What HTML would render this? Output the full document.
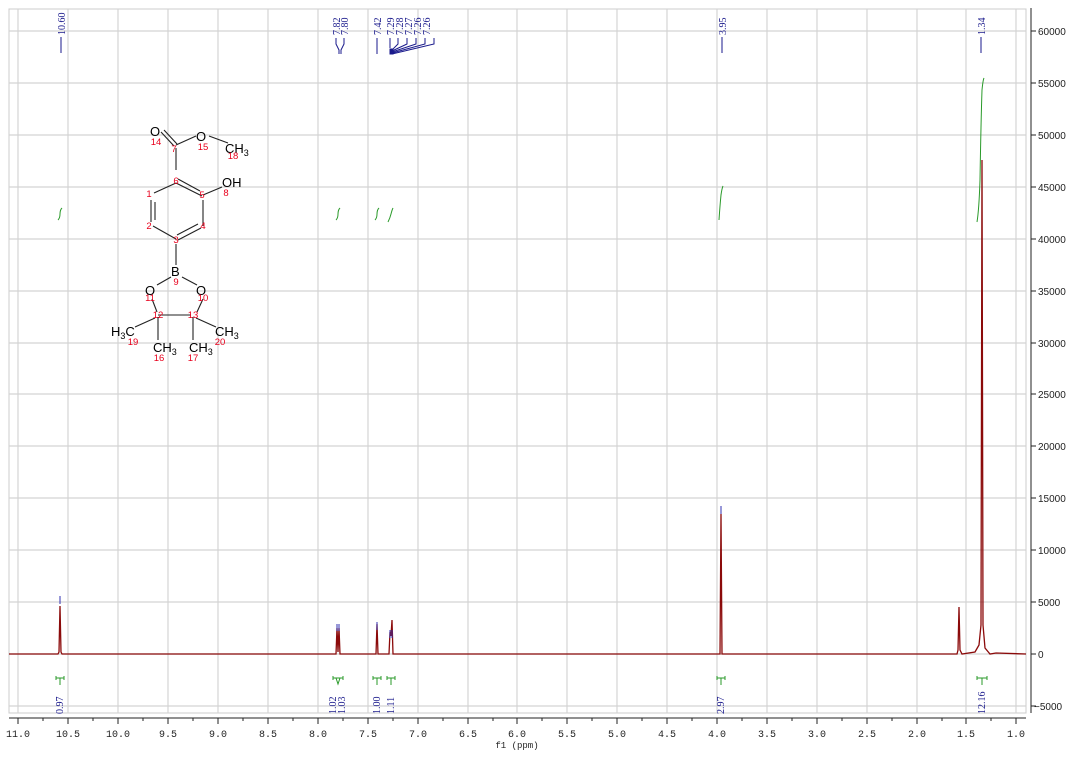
<!DOCTYPE html>
<html><head><meta charset="utf-8"><style>
body{margin:0;background:#fff;}
svg{display:block;font-family:"Liberation Sans",sans-serif;}
.g{stroke:#d4d4d4;stroke-width:1.2;}
.t{font-family:"Liberation Serif",serif;font-size:10px;fill:#1a1a8c;}
.ax{font-family:"Liberation Mono",monospace;font-size:10px;fill:#222;}
.r{fill:#e8001c;font-size:9.5px;}
.a{fill:#000;font-size:13px;}
</style></head><body>
<svg width="1088" height="760" viewBox="0 0 1088 760">
<rect x="9" y="9" width="1017" height="704" fill="#fff" stroke="#ccc"/>
<g class="g">
<line x1="18" y1="9" x2="18" y2="713"/><line x1="68" y1="9" x2="68" y2="713"/><line x1="118" y1="9" x2="118" y2="713"/><line x1="168" y1="9" x2="168" y2="713"/><line x1="218" y1="9" x2="218" y2="713"/><line x1="268" y1="9" x2="268" y2="713"/><line x1="318" y1="9" x2="318" y2="713"/><line x1="368" y1="9" x2="368" y2="713"/><line x1="418" y1="9" x2="418" y2="713"/><line x1="468" y1="9" x2="468" y2="713"/><line x1="517" y1="9" x2="517" y2="713"/><line x1="567" y1="9" x2="567" y2="713"/><line x1="617" y1="9" x2="617" y2="713"/><line x1="667" y1="9" x2="667" y2="713"/><line x1="717" y1="9" x2="717" y2="713"/><line x1="767" y1="9" x2="767" y2="713"/><line x1="817" y1="9" x2="817" y2="713"/><line x1="867" y1="9" x2="867" y2="713"/><line x1="917" y1="9" x2="917" y2="713"/><line x1="966" y1="9" x2="966" y2="713"/><line x1="1016" y1="9" x2="1016" y2="713"/>
<line x1="9" y1="31" x2="1026" y2="31"/><line x1="9" y1="83" x2="1026" y2="83"/><line x1="9" y1="135" x2="1026" y2="135"/><line x1="9" y1="187" x2="1026" y2="187"/><line x1="9" y1="239" x2="1026" y2="239"/><line x1="9" y1="291" x2="1026" y2="291"/><line x1="9" y1="343" x2="1026" y2="343"/><line x1="9" y1="394" x2="1026" y2="394"/><line x1="9" y1="446" x2="1026" y2="446"/><line x1="9" y1="498" x2="1026" y2="498"/><line x1="9" y1="550" x2="1026" y2="550"/><line x1="9" y1="602" x2="1026" y2="602"/><line x1="9" y1="654" x2="1026" y2="654"/><line x1="9" y1="706" x2="1026" y2="706"/>
</g>
<!-- y axis -->
<line x1="1031" y1="8" x2="1031" y2="713" stroke="#222"/>
<g stroke="#222">
<line x1="1031" y1="31" x2="1036" y2="31"/><line x1="1031" y1="83" x2="1036" y2="83"/><line x1="1031" y1="135" x2="1036" y2="135"/><line x1="1031" y1="187" x2="1036" y2="187"/><line x1="1031" y1="239" x2="1036" y2="239"/><line x1="1031" y1="291" x2="1036" y2="291"/><line x1="1031" y1="343" x2="1036" y2="343"/><line x1="1031" y1="394" x2="1036" y2="394"/><line x1="1031" y1="446" x2="1036" y2="446"/><line x1="1031" y1="498" x2="1036" y2="498"/><line x1="1031" y1="550" x2="1036" y2="550"/><line x1="1031" y1="602" x2="1036" y2="602"/><line x1="1031" y1="654" x2="1036" y2="654"/><line x1="1031" y1="706" x2="1036" y2="706"/>
</g>
<g class="ax" font-family="Liberation Sans" style="font-family:'Liberation Sans',sans-serif;font-size:10px">
<text x="1038" y="35">60000</text><text x="1038" y="87">55000</text><text x="1038" y="139">50000</text><text x="1038" y="191">45000</text><text x="1038" y="243">40000</text><text x="1038" y="295">35000</text><text x="1038" y="347">30000</text><text x="1038" y="398">25000</text><text x="1038" y="450">20000</text><text x="1038" y="502">15000</text><text x="1038" y="554">10000</text><text x="1038" y="606">5000</text><text x="1038" y="658">0</text><text x="1034" y="710">−5000</text>
</g>
<!-- x axis -->
<line x1="9" y1="718" x2="1026" y2="718" stroke="#222"/>
<g stroke="#222">
<line x1="18" y1="718" x2="18" y2="724"/><line x1="68" y1="718" x2="68" y2="724"/><line x1="118" y1="718" x2="118" y2="724"/><line x1="168" y1="718" x2="168" y2="724"/><line x1="218" y1="718" x2="218" y2="724"/><line x1="268" y1="718" x2="268" y2="724"/><line x1="318" y1="718" x2="318" y2="724"/><line x1="368" y1="718" x2="368" y2="724"/><line x1="418" y1="718" x2="418" y2="724"/><line x1="468" y1="718" x2="468" y2="724"/><line x1="517" y1="718" x2="517" y2="724"/><line x1="567" y1="718" x2="567" y2="724"/><line x1="617" y1="718" x2="617" y2="724"/><line x1="667" y1="718" x2="667" y2="724"/><line x1="717" y1="718" x2="717" y2="724"/><line x1="767" y1="718" x2="767" y2="724"/><line x1="817" y1="718" x2="817" y2="724"/><line x1="867" y1="718" x2="867" y2="724"/><line x1="917" y1="718" x2="917" y2="724"/><line x1="966" y1="718" x2="966" y2="724"/><line x1="1016" y1="718" x2="1016" y2="724"/>
<line x1="43" y1="718" x2="43" y2="721"/><line x1="93" y1="718" x2="93" y2="721"/><line x1="143" y1="718" x2="143" y2="721"/><line x1="193" y1="718" x2="193" y2="721"/><line x1="243" y1="718" x2="243" y2="721"/><line x1="293" y1="718" x2="293" y2="721"/><line x1="343" y1="718" x2="343" y2="721"/><line x1="393" y1="718" x2="393" y2="721"/><line x1="443" y1="718" x2="443" y2="721"/><line x1="493" y1="718" x2="493" y2="721"/><line x1="542" y1="718" x2="542" y2="721"/><line x1="592" y1="718" x2="592" y2="721"/><line x1="642" y1="718" x2="642" y2="721"/><line x1="692" y1="718" x2="692" y2="721"/><line x1="742" y1="718" x2="742" y2="721"/><line x1="792" y1="718" x2="792" y2="721"/><line x1="842" y1="718" x2="842" y2="721"/><line x1="892" y1="718" x2="892" y2="721"/><line x1="942" y1="718" x2="942" y2="721"/><line x1="991" y1="718" x2="991" y2="721"/>
</g>
<g class="ax" text-anchor="middle">
<text x="18" y="737">11.0</text><text x="68" y="737">10.5</text><text x="118" y="737">10.0</text><text x="168" y="737">9.5</text><text x="218" y="737">9.0</text><text x="268" y="737">8.5</text><text x="318" y="737">8.0</text><text x="368" y="737">7.5</text><text x="418" y="737">7.0</text><text x="468" y="737">6.5</text><text x="517" y="737">6.0</text><text x="567" y="737">5.5</text><text x="617" y="737">5.0</text><text x="667" y="737">4.5</text><text x="717" y="737">4.0</text><text x="767" y="737">3.5</text><text x="817" y="737">3.0</text><text x="867" y="737">2.5</text><text x="917" y="737">2.0</text><text x="966" y="737">1.5</text><text x="1016" y="737">1.0</text>
<text x="517" y="748" style="font-size:9px">f1 (ppm)</text>
</g>
<!-- spectrum -->
<path d="M9 654 L58 654 L59 652 L60 606 L61 652 L62 654 L336 654 L337 628 L338 652 L339 628 L340 654 L376 654 L377 624 L378 654 L389 654 L390 632 L391 636 L392 620 L393 654 L720 654 L721 514 L722 654 L957 654 L958 650 L959 607 L960 650 L962 654 L975 652 L979 645 L981 625 L982 160 L983 625 L985 648 L990 654 L996 653 L1026 654" fill="none" stroke="#8b0a0a" stroke-width="1.3"/>
<!-- peak marks -->
<g stroke="#3030b0"><line x1="60" y1="596" x2="60" y2="604"/><line x1="337" y1="624" x2="337" y2="631"/><line x1="339" y1="624" x2="339" y2="631"/><line x1="377" y1="622" x2="377" y2="630"/><line x1="390" y1="630" x2="390" y2="638"/><line x1="392" y1="630" x2="392" y2="638"/><line x1="721" y1="506" x2="721" y2="514"/></g>
<!-- integrals -->
<g fill="none" stroke="#2a9a2a" stroke-width="1">
<path d="M58 220 Q60 218 60 214 Q60 210 62 208"/>
<path d="M336 220 Q338 218 338 214 Q338 210 340 208"/>
<path d="M375 220 Q377 218 377 214 Q377 210 379 208"/>
<path d="M388 222 Q390 218 391 214 Q392 210 393 208"/>
<path d="M719 220 Q720 205 721 195 Q722 188 723 186"/>
<path d="M977 222 Q979 210 980 180 Q981 120 982 90 Q983 80 984 78"/>
</g>
<!-- integral brackets -->
<g stroke="#2a9a2a" fill="none"><path d="M56 678 H64 M56 676 V680 M64 676 V680 M60 678 V685"/>
<path d="M333 678 H343 M333 676 V680 M343 676 V680 M336 678 L338 684 L340 678"/>
<path d="M373 678 H381 M373 676 V680 M381 676 V680 M377 678 V685"/>
<path d="M387 678 H395 M387 676 V680 M395 676 V680 M391 678 V685"/>
<path d="M717 678 H725 M717 676 V680 M725 676 V680 M721 678 V685"/>
<path d="M977 678 H987 M977 676 V680 M987 676 V680 M982 678 V685"/></g>
<g class="t">
<text transform="translate(63,714) rotate(-90)">0.97</text>
<text transform="translate(336,714) rotate(-90)">1.02</text>
<text transform="translate(345,714) rotate(-90)">1.03</text>
<text transform="translate(380,714) rotate(-90)">1.00</text>
<text transform="translate(394,714) rotate(-90)">1.11</text>
<text transform="translate(724,714) rotate(-90)">2.97</text>
<text transform="translate(985,714) rotate(-90)">12.16</text>
</g>
<!-- peak labels top -->
<g stroke="#1a1a8c" fill="none">
<line x1="61" y1="37" x2="61" y2="53"/>
<path d="M336 38 V44 L339 50 V54 M344 38 V44 L341 50 V54"/>
<line x1="377" y1="38" x2="377" y2="54"/>
<path d="M390 38 V48 M398 38 V44 L392 50 M407 38 V44 L392 51 M416 38 V44 L392 52 M425 38 V44 L392 53 M434 38 V44 L392 54"/>
<rect x="390" y="49" width="3" height="5" fill="#1a1a8c"/>
<line x1="722" y1="37" x2="722" y2="53"/>
<line x1="981" y1="37" x2="981" y2="53"/>
</g>
<g class="t">
<text transform="translate(65,35) rotate(-90)">10.60</text>
<text transform="translate(340,35) rotate(-90)">7.82</text>
<text transform="translate(348,35) rotate(-90)">7.80</text>
<text transform="translate(381,35) rotate(-90)">7.42</text>
<text transform="translate(394,35) rotate(-90)">7.29</text>
<text transform="translate(403,35) rotate(-90)">7.28</text>
<text transform="translate(412,35) rotate(-90)">7.27</text>
<text transform="translate(421,35) rotate(-90)">7.26</text>
<text transform="translate(430,35) rotate(-90)">7.26</text>
<text transform="translate(726,35) rotate(-90)">3.95</text>
<text transform="translate(985,35) rotate(-90)">1.34</text>
</g>
<!-- molecule -->
<g stroke="#222" stroke-width="1.1" fill="none">
<line x1="161" y1="132" x2="174" y2="146"/><line x1="164" y1="130" x2="177" y2="144"/>
<line x1="176" y1="145" x2="196" y2="136"/>
<line x1="209" y1="136" x2="228" y2="143"/>
<line x1="176" y1="148" x2="176" y2="170"/>
<line x1="176" y1="183" x2="202" y2="196"/><line x1="178" y1="179" x2="200" y2="191"/>
<line x1="203" y1="195" x2="222" y2="187"/>
<line x1="176" y1="183" x2="154" y2="193"/>
<line x1="151" y1="200" x2="151" y2="222"/><line x1="155" y1="202" x2="155" y2="220"/>
<line x1="153" y1="226" x2="176" y2="239"/>
<line x1="203" y1="200" x2="203" y2="226"/>
<line x1="201" y1="228" x2="178" y2="240"/><line x1="198" y1="224" x2="177" y2="235"/>
<line x1="176" y1="244" x2="176" y2="265"/>
<line x1="171" y1="277" x2="157" y2="285"/>
<line x1="182" y1="277" x2="197" y2="285"/>
<line x1="152" y1="299" x2="157" y2="312"/>
<line x1="203" y1="299" x2="197" y2="312"/>
<line x1="158" y1="315" x2="191" y2="315"/>
<line x1="158" y1="317" x2="158" y2="340"/>
<line x1="193" y1="317" x2="193" y2="340"/>
<line x1="155" y1="318" x2="135" y2="327"/>
<line x1="196" y1="318" x2="216" y2="327"/>
</g>
<g class="a">
<text x="150" y="136">O</text><text x="196" y="141">O</text><text x="225" y="153">CH<tspan font-size="9" dy="3">3</tspan></text>
<text x="222" y="187">OH</text>
<text x="171" y="276">B</text>
<text x="145" y="295">O</text><text x="196" y="295">O</text>
<text x="111" y="336">H<tspan font-size="9" dy="3">3</tspan><tspan dy="-3">C</tspan></text>
<text x="153" y="352">CH<tspan font-size="9" dy="3">3</tspan></text>
<text x="189" y="352">CH<tspan font-size="9" dy="3">3</tspan></text>
<text x="215" y="336">CH<tspan font-size="9" dy="3">3</tspan></text>
</g>
<g class="r" text-anchor="middle">
<text x="156" y="145">14</text><text x="174" y="152">7</text><text x="203" y="150">15</text><text x="233" y="159">18</text>
<text x="176" y="184">6</text><text x="226" y="196">8</text><text x="202" y="198">5</text>
<text x="149" y="197">1</text><text x="149" y="229">2</text><text x="203" y="229">4</text><text x="176" y="243">3</text>
<text x="176" y="285">9</text><text x="150" y="301">11</text><text x="203" y="301">10</text>
<text x="158" y="318">12</text><text x="193" y="318">13</text>
<text x="133" y="345">19</text><text x="159" y="361">16</text><text x="193" y="361">17</text><text x="220" y="345">20</text>
</g>
</svg>
</body></html>
